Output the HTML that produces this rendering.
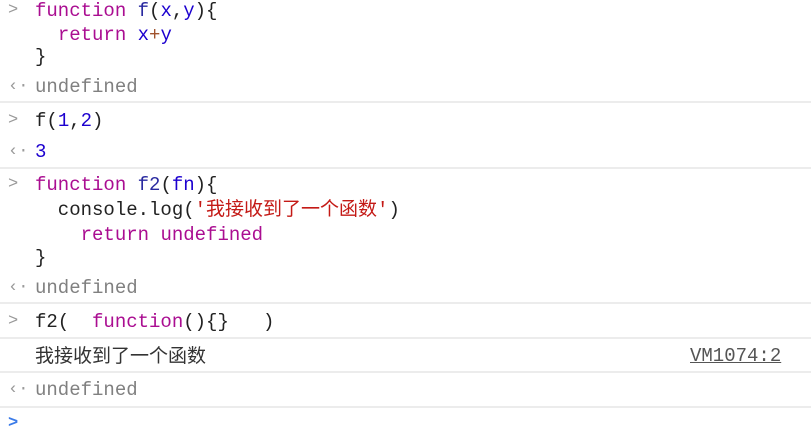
<!DOCTYPE html>
<html><head><meta charset="utf-8"><style>
body{margin:0;width:811px;height:425px;background:#fff;overflow:hidden;position:relative;font-family:"Liberation Mono","Noto Sans CJK SC",monospace;font-size:19px;color:#222}
.l{position:absolute;left:35px;height:24px;line-height:24px;white-space:pre}
.p{position:absolute;left:8px;height:24px;line-height:24px;color:#999;font-size:17px}
.s{position:absolute;left:0;width:811px;height:2px;background:#ececec}
.k{color:#aa0d91}.n{color:#1c00cf}.v{color:#1c00cf}.g{color:#808080}.str{color:#c41a16}.o{color:#a0522d}
</style></head><body>
<div class="p" style="top:-1px">&gt;</div>
<div class="l" style="top:-1px"><span class="k">function</span> <span style="color:#2a2aa0">f</span>(<span class="v">x</span>,<span class="v">y</span>){</div>
<div class="l" style="top:23px">  <span class="k">return</span> <span class="v">x</span><span class="o">+</span><span class="v">y</span></div>
<div class="l" style="top:45px">}</div>
<div class="p" style="top:75px">‹·</div>
<div class="l g" style="top:75px">undefined</div>
<div class="s" style="top:101px"></div>
<div class="p" style="top:109px">&gt;</div>
<div class="l" style="top:109px">f(<span class="n">1</span>,<span class="n">2</span>)</div>
<div class="p" style="top:140px">‹·</div>
<div class="l n" style="top:140px">3</div>
<div class="s" style="top:167px"></div>
<div class="p" style="top:173px">&gt;</div>
<div class="l" style="top:173px"><span class="k">function</span> <span style="color:#2a2aa0">f2</span>(<span class="v">fn</span>){</div>
<div class="l" style="top:198px">  console.log(<span class="str">'我接收到了一个函数'</span>)</div>
<div class="l" style="top:223px">    <span class="k">return</span> <span class="k">undefined</span></div>
<div class="l" style="top:246px">}</div>
<div class="p" style="top:276px">‹·</div>
<div class="l g" style="top:276px">undefined</div>
<div class="s" style="top:302px"></div>
<div class="p" style="top:310px">&gt;</div>
<div class="l" style="top:310px">f2(  <span class="k">function</span>(){}   )</div>
<div class="s" style="top:337px"></div>
<div class="l" style="top:343px;font-family:'Noto Sans CJK SC',sans-serif;font-size:19px;color:#333">我接收到了一个函数</div>
<div class="l" style="top:344px;left:690px;color:#555;text-decoration:underline">VM1074:2</div>
<div class="s" style="top:371px"></div>
<div class="p" style="top:378px">‹·</div>
<div class="l g" style="top:378px">undefined</div>
<div class="s" style="top:406px"></div>
<div class="p" style="top:412px;color:#3b7be8;font-weight:bold">&gt;</div>
</body></html>
